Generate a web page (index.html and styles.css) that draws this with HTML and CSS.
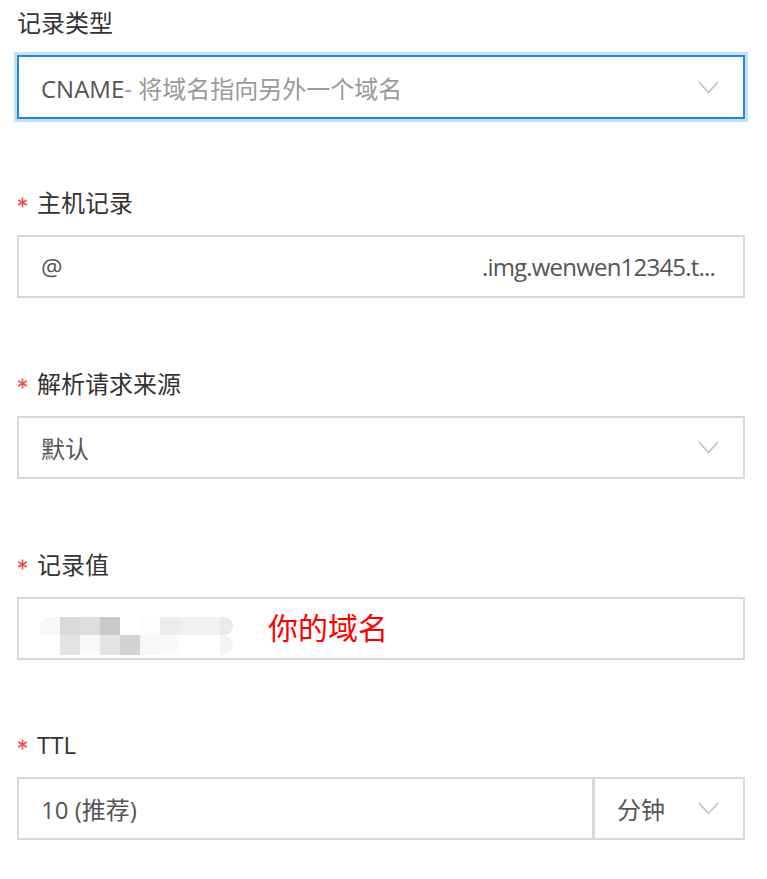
FILE: index.html
```html
<!DOCTYPE html>
<html lang="zh-CN">
<head>
<meta charset="utf-8">
<title>记录</title>
<link rel="stylesheet" href="styles.css">
</head>
<body>
<div class="form">
  <div class="field gap-s">
    <div class="label">记录类型</div>
    <div class="box select focused box-first">
      <span class="val"><span class="dark">CNAME</span><span class="light">- 将域名指向另外一个域名</span></span>
      <svg class="chev" width="21" height="13" viewBox="0 0 21 13"><polyline points="1,1 10.5,11.5 20,1" fill="none" stroke="#bdbdbd" stroke-width="1.5"/></svg>
    </div>
  </div>

  <div class="field gap-l">
    <div class="label"><svg class="req" width="11" height="11" viewBox="0 0 11 11"><g stroke="#e8504f" stroke-width="1.6"><line x1="5.5" y1="0.5" x2="5.5" y2="10.5"/><line x1="1.2" y1="3" x2="9.8" y2="8"/><line x1="1.2" y1="8" x2="9.8" y2="3"/></g></svg>主机记录</div>
    <div class="box">
      <span class="val">@</span>
      <span class="val suffix">.img.wenwen12345.t...</span>
    </div>
  </div>

  <div class="field gap-l">
    <div class="label"><svg class="req" width="11" height="11" viewBox="0 0 11 11"><g stroke="#e8504f" stroke-width="1.6"><line x1="5.5" y1="0.5" x2="5.5" y2="10.5"/><line x1="1.2" y1="3" x2="9.8" y2="8"/><line x1="1.2" y1="8" x2="9.8" y2="3"/></g></svg>解析请求来源</div>
    <div class="box select">
      <span class="val">默认</span>
      <svg class="chev" width="21" height="13" viewBox="0 0 21 13"><polyline points="1,1 10.5,11.5 20,1" fill="none" stroke="#bdbdbd" stroke-width="1.5"/></svg>
    </div>
  </div>

  <div class="field">
    <div class="label"><svg class="req" width="11" height="11" viewBox="0 0 11 11"><g stroke="#e8504f" stroke-width="1.6"><line x1="5.5" y1="0.5" x2="5.5" y2="10.5"/><line x1="1.2" y1="3" x2="9.8" y2="8"/><line x1="1.2" y1="8" x2="9.8" y2="3"/></g></svg>记录值</div>
    <div class="box box-value">
      <div class="mosaic">
        <i class="m1 rl"></i><i class="m2"></i><i class="m3"></i><i class="m4"></i><i class="m0"></i><i class="m5"></i><i class="m6"></i><i class="m7"></i><i class="m7"></i><i class="m8 rr"></i>
        <i class="m0"></i><i class="m9"></i><i class="m10"></i><i class="m9"></i><i class="m11"></i><i class="m1"></i><i class="m10"></i><i class="m0"></i><i class="m0"></i><i class="m12 rr"></i>
      </div>
      <span class="note">你的域名</span>
    </div>
  </div>

  <div class="field">
    <div class="label"><svg class="req" width="11" height="11" viewBox="0 0 11 11"><g stroke="#e8504f" stroke-width="1.6"><line x1="5.5" y1="0.5" x2="5.5" y2="10.5"/><line x1="1.2" y1="3" x2="9.8" y2="8"/><line x1="1.2" y1="8" x2="9.8" y2="3"/></g></svg>TTL</div>
    <div class="split">
      <div class="box ttl-input"><span class="val">10 (推荐)</span></div>
      <div class="box select unit">
        <span class="val">分钟</span>
        <svg class="chev" width="21" height="13" viewBox="0 0 21 13"><polyline points="1,1 10.5,11.5 20,1" fill="none" stroke="#bdbdbd" stroke-width="1.5"/></svg>
      </div>
    </div>
  </div>
</div>
</body>
</html>
```
FILE: styles.css
```css
* { box-sizing: border-box; }
html, body { margin: 0; padding: 0; background: #fff; }
body {
  font-family: "Open Sans", "Noto Sans CJK SC", sans-serif;
  font-size: 24px;
  color: #333;
}
.form {
  width: 728px;
  margin-left: 17px;
  padding-top: 6px;
}
.field {
  display: flex;
  flex-direction: column;
  margin-bottom: 68px;
}
.gap-s { margin-bottom: 67px; }
.gap-l { margin-bottom: 69px; }
.label {
  height: 33px;
  line-height: 33px;
  display: flex;
  align-items: center;
  color: #333;
  margin-bottom: 16px;
  white-space: nowrap;
}
.req {
  margin-right: 9px;
  flex: none;
}
.box {
  height: 63px;
  border: 2px solid #d8d8d8;
  display: flex;
  align-items: center;
  padding: 0 24px 0 22px;
  background: #fff;
}
.box-first { height: 64px; }
.focused {
  border-color: #2188de;
  box-shadow: 0 0 0 3px #c8e0f4;
}
.val {
  color: #555;
  white-space: nowrap;
}
.dark { color: #555; }
.light { color: #9a9a9a; }
.select { justify-content: space-between; }
.chev { flex: none; }
.suffix {
  margin-left: auto;
  margin-right: 4px;
  letter-spacing: -0.8px;
}
.box-value {
  align-items: flex-start;
  padding-left: 21px;
}
.mosaic {
  display: grid;
  grid-template-columns: repeat(9, 20px) 13px;
  grid-template-rows: 18px 20px;
  margin-top: 18px;
  filter: blur(0.6px);
}
.mosaic i { display: block; }
.m0 { background: #ffffff; }
.m1 { background: #f7f7f7; }
.m2 { background: #d9d9d9; }
.m3 { background: #dedede; }
.m4 { background: #c9c9c9; }
.m5 { background: #fcfcfc; }
.m6 { background: #ececec; }
.m7 { background: #f1f1f1; }
.m8 { background: #eaeaea; }
.m9 { background: #e4e4e4; }
.m10 { background: #f9f9f9; }
.m11 { background: #d3d3d3; }
.m12 { background: #f4f4f4; }
.rl { border-radius: 10px 0 0 0; }
.rr { border-radius: 0 10px 10px 0; }
.note {
  color: #ff0000;
  font-size: 30px;
  line-height: 30px;
  margin-left: 35px;
  margin-top: 14px;
  white-space: nowrap;
}
.split {
  display: flex;
}
.ttl-input {
  width: 577px;
  flex: none;
}
.unit {
  flex: 1;
  border-left-width: 1px;
  padding-left: 22px;
}
```
